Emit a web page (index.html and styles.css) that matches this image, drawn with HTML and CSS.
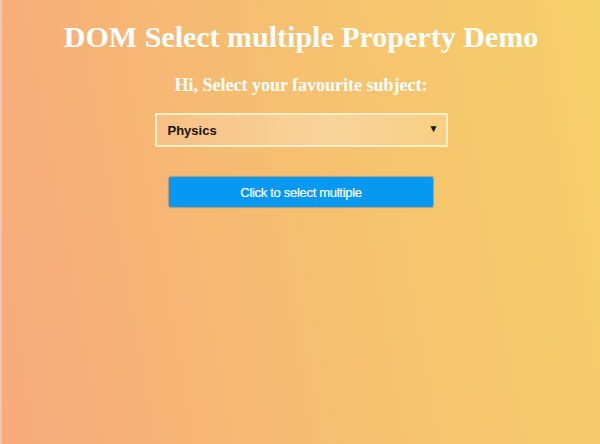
FILE: index.html
```html
<!DOCTYPE html>
<html>
<head>
<meta charset="utf-8">
<link rel="stylesheet" href="styles.css">
</head>
<body>
<main class="page">
  <h1 class="title">DOM Select multiple Property Demo</h1>
  <h3 class="subtitle">Hi, Select your favourite subject:</h3>
  <div class="select-wrap">
    <span class="select-value">Physics</span>
    <span class="select-arrow">&#9660;</span>
  </div>
  <button class="btn">Click to select multiple</button>
</main>
</body>
</html>
```
FILE: styles.css
```css
html, body {
  margin: 0;
  height: 100%;
}
body {
  background: linear-gradient(80deg, #f7a97c 0%, #f6bf70 50%, #f6d06a 100%);
  border-left: 2px solid #ecc8b4;
  box-sizing: border-box;
  font-family: "Liberation Serif", "Times New Roman", serif;
}
.page {
  display: flex;
  flex-direction: column;
  align-items: center;
  padding-top: 19px;
}
.title {
  margin: 0;
  color: #fff;
  font-size: 30px;
  font-weight: bold;
  line-height: 36px;
}
.subtitle {
  margin: 20px 0 0;
  color: #fff;
  font-size: 18px;
  font-weight: bold;
  line-height: 20px;
}
.select-wrap {
  margin-top: 18px;
  width: 293px;
  height: 34px;
  box-sizing: border-box;
  border: 2px solid #fdf0c8;
  background: linear-gradient(90deg, rgba(255,255,255,0.12), rgba(255,255,255,0.3) 60%, rgba(255,255,255,0.15));
  display: flex;
  align-items: center;
  justify-content: space-between;
  padding: 0 7px 0 11px;
  font-family: "Liberation Sans", Arial, sans-serif;
  font-weight: bold;
  font-size: 13px;
  color: #1a1208;
}
.select-arrow {
  font-size: 10px;
  margin-top: -3px;
}
.btn {
  margin-top: 30px;
  width: 264px;
  height: 30px;
  border: none;
  border-radius: 2px;
  background: #0798f2;
  box-shadow: 0 0 1px 1px rgba(80, 90, 110, 0.35);
  color: #fff;
  font-family: "Liberation Sans", Arial, sans-serif;
  font-size: 13px;
  letter-spacing: -0.3px;
  -webkit-text-stroke: 0.2px #fff;
}
```
